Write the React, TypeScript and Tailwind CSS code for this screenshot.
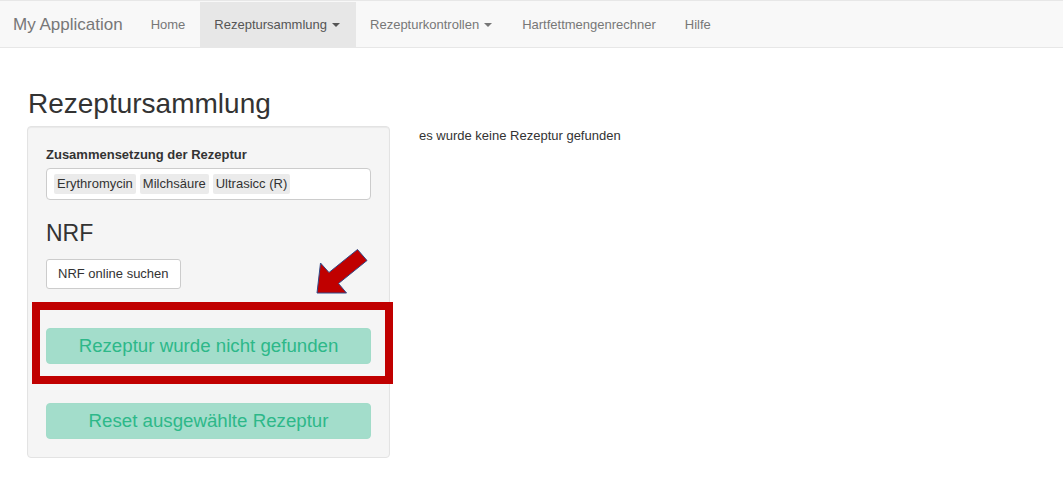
import React from "react";

function Caret() {
  return (
    <span className="ml-[5px] inline-block h-0 w-0 border-x-[4px] border-t-[4px] border-x-transparent border-t-current align-middle" />
  );
}

export default function App() {
  return (
    <div
      className="relative min-h-[479px] bg-white text-[13px] text-[#333]"
      style={{ fontFamily: '"Liberation Sans", Arial, sans-serif' }}
    >
      {/* Navbar */}
      <nav className="flex h-[48px] items-stretch border-y border-[#e7e7e7] bg-[#f8f8f8] pt-[1px] text-[13px]">
        <div className="flex items-center pl-[13px] pr-[13px] text-[17px] text-[#777]">My Application</div>
        <div className="flex items-center px-[15px] text-[#777]">Home</div>
        <div className="flex items-center bg-[#e7e7e7] pl-[14px] pr-[16px] text-[#555]">
          Rezeptursammlung
          <Caret />
        </div>
        <div className="flex items-center pl-[14px] pr-[30px] text-[#777]">
          Rezepturkontrollen
          <Caret />
        </div>
        <div className="flex items-center pr-[29px] text-[#777]">Hartfettmengenrechner</div>
        <div className="flex items-center text-[#777]">Hilfe</div>
      </nav>

      <main className="pl-[27px] pt-[40px]">
        <h2 className="ml-[1px] text-[28px] leading-[31px] text-[#333]">Rezeptursammlung</h2>
        <div className="mt-[7px] flex items-start gap-[29px]">
          {/* Well */}
          <div className="w-[363px] rounded-[4px] border border-[#e3e3e3] bg-[#f5f5f5] px-[18px] pb-[18px] pt-[18px] shadow-[inset_0_1px_1px_rgba(0,0,0,0.05)]">
            <div className="text-[13px] font-bold leading-[20px] text-[#333]">Zusammensetzung der Rezeptur</div>
            <div className="mt-[3px] flex h-[32px] items-center gap-[4px] rounded-[4px] border border-[#ccc] bg-white px-[7px]">
              <span className="rounded-[2px] bg-[#ebebeb] px-[3px] text-[13px] leading-[20px] text-[#333]">Erythromycin</span>
              <span className="rounded-[2px] bg-[#ebebeb] px-[3px] text-[13px] leading-[20px] text-[#333]">Milchsäure</span>
              <span className="rounded-[2px] bg-[#ebebeb] px-[3px] text-[13px] leading-[20px] text-[#333]">Ultrasicc (R)</span>
            </div>
            <h3 className="mt-[20px] text-[23px] leading-[26px] text-[#333]">NRF</h3>
            <button className="mt-[13px] flex h-[30px] items-center rounded-[3px] border border-[#ccc] bg-white px-[11px] text-[13px] text-[#333]">
              NRF online suchen
            </button>
            <div className="mt-[39px] flex h-[36px] w-full items-center justify-center rounded-[4px] border border-[#a2dcc9] bg-[#a3ddcb] text-[18.7px] text-[#2db889]">
              Rezeptur wurde nicht gefunden
            </div>
            <div className="mt-[39px] flex h-[36px] w-full items-center justify-center rounded-[4px] border border-[#a2dcc9] bg-[#a3ddcb] text-[18.7px] text-[#2db889]">
              Reset ausgewählte Rezeptur
            </div>
          </div>
          <div className="text-[13px] leading-[20px] text-[#333]">es wurde keine Rezeptur gefunden</div>
        </div>
      </main>

      {/* Annotation: red frame */}
      <div className="pointer-events-none absolute left-[32px] top-[302px] h-[82px] w-[361px] border-[8px] border-[#c00000]" />
      {/* Annotation: arrow */}
      <svg className="pointer-events-none absolute left-[300px] top-[240px]" width="80" height="60" viewBox="300 240 80 60">
        <polygon
          points="317,293 320.5,263 329,272.5 357.5,249.5 367,260.5 338.5,283.5 346.5,293"
          fill="#c00000"
          stroke="#2f4a8a"
          strokeWidth="1"
          strokeLinejoin="miter"
        />
      </svg>
    </div>
  );
}
